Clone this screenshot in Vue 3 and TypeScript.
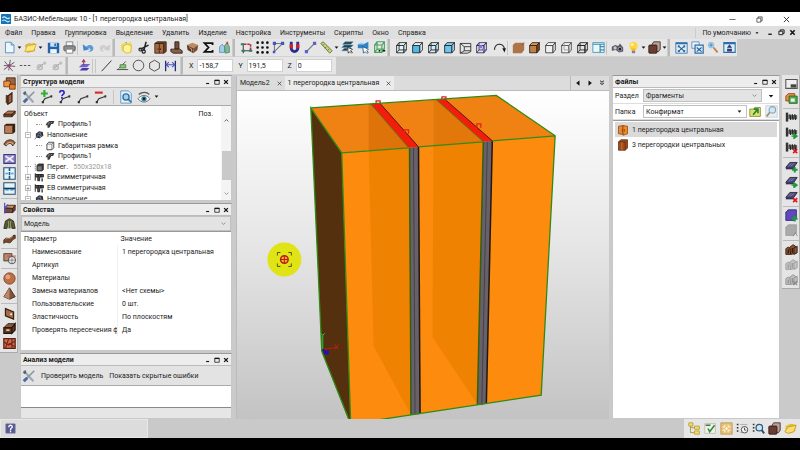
<script setup lang="ts">
import { ref } from 'vue'

const cube = (front: string, top: string, side: string, stroke = '#1a1a1a') =>
  `<g stroke="${stroke}" stroke-linejoin="round"><path d="M2 5.5h9v9H2z" fill="${front}"/><path d="M2 5.5l3-3.500h9l-3 3.500z" fill="${top}"/><path d="M11 5.500l3-3.500v9l-3 3.500z" fill="${side}"/></g>`
const wire = (fill: string, stroke = '#1a1a1a') =>
  `${cube(fill, fill, fill, stroke)}<path d="M5 2v9h9M5 11l-3 3.500" fill="none" stroke="${stroke}"/>`
const plus = '<path d="M12 8.500v7M8.500 12h7" stroke="#1f9a3a" stroke-width="2.500"/>'
const arrow = '<path d="M8 12.500h5M11 9.500l4 3-4 3z" stroke="#1f9a3a" fill="#1f9a3a" stroke-width="1.500"/>'
const cross = '<path d="M10 10l5 5M15 10l-5 5" stroke="#e01818" stroke-width="2"/>'
const screw =
  '<path d="M1 2h3v11H1z" fill="#333"/><path d="M4 5h11v5H4z" fill="#666"/><path d="M6 4l1 7M9 4l1 7M12 4l1 7" stroke="#222" stroke-width="1.500"/>'
const slab =
  '<path d="M1 9l5-6h9l-4 6z" fill="#4e4a82" stroke="#222"/><path d="M1 9h10v2.500H1z" fill="#34305e"/><path d="M4 8l4-4M7 8l4-4" stroke="#8a86bd"/>'
const pen = (c: string) => `<path d="M3 14l2.500-4 7-2.500" fill="none" stroke="${c}" stroke-width="1.300"/><path d="M2 12.500h2.500v2.500H2zM12 6h2v2.500h-2z" fill="${c}"/>`
const boxes = (a: string, b: string) =>
  `<path d="M1 7l3-2 3 2v7H1z" fill="${a}" stroke="${b}"/><path d="M6 5l4-3 3 2v9l-6 1z" fill="${a}" stroke="${b}"/><path d="M11 6l4-2v8l-4 2z" fill="${a}" stroke="${b}"/><path d="M4 8v5M9 6v6" stroke="${b}" stroke-width="1.500"/>`
const wood = '#9c6440'
const woodDark = '#3a2012'

const icons: Record<string, string> = {
  app: '<rect width="16" height="16" rx="1" fill="#1674b5"/><path d="M2 6q3-3 6 0t6 0M2 11q3-3 6 0t6 0" fill="none" stroke="#cdeaff" stroke-width="1.800"/>',
  new: '<path d="M3 1.500h7l3.500 3.500v9.500H3z" fill="#eef7ff" stroke="#3d82bd"/><path d="M10 1.500V5h3.500" fill="#b8dcf5" stroke="#3d82bd"/>',
  open: '<path d="M2 5l5-2 2 1 4-1v9l-9 2z" fill="#f0cd48" stroke="#c9a020"/><path d="M1 13l3-7 11-2-3 8z" fill="#ffe680" stroke="#d0aa28"/>',
  save: '<path d="M1 2h13l1 1v12H1z" fill="#2364a8"/><path d="M4 2h8v5H4z" fill="#cde3f7"/><path d="M4 10h8v5H4z" fill="#eef5fc"/><path d="M9 3h2v3H9z" fill="#2364a8"/>',
  print: '<path d="M4 1h8v5H4z" fill="#f5f5f5" stroke="#777"/><rect x="1" y="6" width="14" height="6" rx="1" fill="#8b8d92" stroke="#555"/><path d="M4 10h8v5H4z" fill="#fff" stroke="#777"/>',
  undo: '<path d="M5 7c4-4 9-2 9 2s-4 5-7 4c4 0 5-5 0-4z" fill="#5a9bd8"/><path d="M1 4l1 8 7-2z" fill="#3e86cf"/>',
  redo: '<path d="M11 7C7 3 2 5 2 9s4 5 7 4c-4 0-5-5 0-4z" fill="#cfcfcf"/><path d="M15 4l-1 8-7-2z" fill="#cacaca"/>',
  copy: '<path d="M1 5l4-3 4 1 4-2 2 4-1 9-7 1-5-3z" fill="#efd957"/><path d="M4 6l5-2 5 2-1 8-5 1-4-3z" fill="#fff3a0" stroke="#d1b83c"/><path d="M6 2l2-1 1 2" fill="#66b34c"/>',
  cut: '<path d="M10 1L7 12M13 5L3 10" stroke="#222" stroke-width="1.800"/><circle cx="7" cy="13" r="2" fill="none" stroke="#222" stroke-width="1.500"/><circle cx="3" cy="10.500" r="1.800" fill="none" stroke="#222" stroke-width="1.500"/>',
  cabinet: `<path d="M1 3h11v12H1z" fill="#a66a42" stroke="${woodDark}"/><path d="M1 3l3-2h11v12l-3 2V3z" fill="#74442a" stroke="${woodDark}"/><path d="M6.500 3v12M5 9v2M8 9v2" stroke="${woodDark}"/>`,
  hinge: '<path d="M6 1h5v9H6z" fill="#74503c" stroke="#2a1a12"/><path d="M1 10h11l3 2v3H4l-3-2z" fill="#8a6048" stroke="#2a1a12"/>',
  block: `<path d="M1 5l7-3 7 3-6 4z" fill="#c08a60"/><path d="M1 5l8 4v6l-7-4z" fill="#5a3420"/><path d="M15 5l-6 4v6l5-4z" fill="#7c4c30"/><path d="M4 8l3 2v3" fill="none" stroke="#e8c8a8"/>`,
  sum: '<path d="M13 5V2.500H3L8 8l-5 5.500h10V11" fill="none" stroke="#111" stroke-width="2.200"/>',
  house: '<path d="M2 7l3-3 3 3v7H2z" fill="#9fd0ec" stroke="#5d8eaa"/><path d="M8 6l3-4 3 5v7l-5 1z" fill="#7fb89a" stroke="#4c8a6a"/><path d="M11 1l1 3" stroke="#d04040" stroke-width="2"/>',
  axes: '<path d="M4 3v12M2 12h13" stroke="#444" stroke-width="1.300"/><path d="M5 4h8v7" fill="none" stroke="#c02840" stroke-width="2" stroke-dasharray="3 1"/><path d="M1 4h4M2 12h4M11 12h4" stroke="#2f7f60" stroke-width="2.500"/>',
  grid: [2, 8, 14].map((y) => [2, 8, 14].map((x) => `<circle cx="${x}" cy="${y}" r="1.600" fill="#111"/>`).join('')).join(''),
  ortho: '<path d="M3 2v11L13 3H4" fill="none" stroke="#777" stroke-width="1.300"/><path d="M1 1h4v4H1zM11 1h4v4h-4zM1 12h3v3H1z" fill="#4754c4"/>',
  magnet: '<path d="M4 1v8a4 4 0 008 0V1" fill="none" stroke="#272d91" stroke-width="3.500"/><path d="M2 4h4v5H2zM10 4h4v5h-4z" fill="#c72332"/>',
  link: '<path d="M3 13L13 3" stroke="#777" stroke-width="1.500"/><path d="M1 11h4v4H1zM11 1h4v4h-4z" fill="#5962cb"/>',
  ruler: '<path d="M1 3l3-2 11 11-3 3z" fill="#c9cf7b" stroke="#61672c"/><path d="M5 4L3.500 5.500M8 7L6 9M11 10l-2 2" stroke="#61672c"/>',
  layers: '<path d="M2 4l3-3h10l-3 3zM1 8l3-3h11l-3 3zM1 12l3-3h5l-2 3z" fill="#29414f" stroke="#4a90b8" stroke-width=".7"/><path d="M8 8l1 7 2-2 2 2 1-1-2-2 2-2z" fill="#fff" stroke="#222"/>',
  layersBlue: '<path d="M1 4h7l6-3v8H1z" fill="#2e83ca"/><path d="M1 4l3-2h4v2z" fill="#9ad0f5"/><path d="M7 7l1 8 2-2 2 2 2-1-2-2 2-2z" fill="#fff" stroke="#27506e"/>',
  boxGreen: '<path d="M2 5h9v9H2zM2 5l3-4h9v9l-3 4M11 5l3-4M5 1v9h9M5 10l-3 4" fill="none" stroke="#43a25a" stroke-width="1.300"/><path d="M7 12h2M12 12h3" stroke="#111" stroke-width="2"/>',
  viewFront: wire('#e5f3fb'),
  viewSolid: cube('#4fbae8', '#e9f5fb', '#e9f5fb'),
  viewTop: wire('#d4edf8'),
  viewBlue: cube('#6cc5ec', '#8fd0ef', '#b5def2'),
  viewBack: '<path d="M1.500 3h13v10l-4 2h-9zM1.500 3l5 4h8M6.500 7v5h8M6.500 12l-5 3" fill="none" stroke="#222"/>',
  viewPurple: `${wire('none', '#2b2450')}<path d="M5 5h4v4H5zM9 9h3v3H9z" fill="#8b6ce0"/>`,
  rotate: '<path d="M2 11A6 6 0 0114 9" fill="none" stroke="#222" stroke-width="1.300"/><path d="M11.500 9l2.500 5 2-5z" fill="#111"/>',
  brownSolid: '<path d="M1 5l3-3h11v9l-3 4H1z" fill="#ad744a"/><path d="M12 5l3-3" stroke="#8a5936"/>',
  brownEdge: cube('#bd8046', '#d59a5c', '#7c4a22', '#2a1a0c'),
  white: cube('#f0f0f0', '#fafafa', '#dedede', '#333'),
  whiteEdge: `${cube('#eeeeee', '#f8f8f8', '#e4e4e4', '#444')}<path d="M5 2v9h9" fill="none" stroke="#999"/>`,
  wire: wire('none', '#1c1c1c'),
  panes: '<path d="M1 2h14v12H1z" fill="#eaf7fa" stroke="#3b8db0"/><path d="M1 4h14M10 4v10M10 7h5M10 11h5" stroke="#3b8db0" stroke-width="1.500"/>',
  camera: '<path d="M1 7l4-2 4 1 2-3 4 5v5l-5 1-4-3-5 1z" fill="#5a5964"/><circle cx="5" cy="8.500" r="2" fill="#c5c8d8"/><circle cx="11" cy="10" r="2.300" fill="#22242e" stroke="#aab"/>',
  bulb: '<circle cx="8" cy="6" r="5" fill="#ffd63e"/><path d="M5 9h6l-1 4H6z" fill="#f1c030"/><path d="M6 12h4v3H6z" fill="#858585"/><circle cx="6.500" cy="4.500" r="1.800" fill="#fff5bb"/>',
  material: '<path d="M5 4l2-3h8v9l-2 3H5z" fill="#b9a196" stroke="#3a2620"/><rect x="1" y="5" width="10" height="10" rx="1" fill="#6a3d32" stroke="#2b1813"/>',
  fit: '<path d="M1 2h14v13H1z" fill="#dcf0fb" stroke="#2f6eaa"/><path d="M1 3h14" stroke="#2f6eaa" stroke-width="2"/><path d="M4 6l8 7M12 6l-8 7" stroke="#2a5684" stroke-width="1.300"/><path d="M4 8V6h2M10 6h2v2M4 11v2h2M10 13h2v-2" fill="none" stroke="#2a5684"/>',
  fitAll: '<path d="M1 1h9v8H1z" fill="#e5f2fb" stroke="#5888bb"/><path d="M5 5h10v10H5z" fill="#dcf0fb" stroke="#2f6eaa" stroke-width="1.500"/><path d="M7 8l6 5M13 8l-6 5" stroke="#2a5684" stroke-width="1.300"/>',
  wand: '<circle cx="5" cy="5" r="3.500" fill="#a8d4ee" stroke="#8ab9d8"/><path d="M8 8l5 6" stroke="#bc8149" stroke-width="2.200"/><path d="M5 3v4M3 5h4" stroke="#337bb2"/>',
  home: '<path d="M1 2h14v12H1z" fill="#dcf0fb" stroke="#2f6eaa" stroke-width="1.300"/><path d="M1 3h14" stroke="#2f6eaa" stroke-width="2"/><path d="M8 4l3 4v5H5V8z" fill="#34407e"/><path d="M5 9h6" stroke="#fff"/>',
  star: '<path d="M1 13L14 4M2 3l10 12M9 1L7 14M1 8l14 1" stroke="#584a5b" stroke-width="1.100"/><circle cx="7.500" cy="8" r="2" fill="#a33e74"/>',
  dash: '<path d="M1 8h14" stroke="#555" stroke-width="1.500" stroke-dasharray="3 2"/>',
  knot: '<path d="M2 13l5-5 6-4" stroke="#bbb"/><circle cx="6" cy="10" r="3" fill="none" stroke="#bbb" stroke-width="1.800"/><circle cx="12" cy="5" r="2" fill="#c0c0c0"/>',
  plane: '<path d="M1 10l4-4h10l-4 4z" fill="#6c65ce"/><path d="M2 14l3-3h9l-3 3z" fill="#473da4"/><path d="M7 8V2M5 4l2-3 2 3" stroke="#a33355" fill="none" stroke-width="1.300"/>',
  line: '<path d="M2 15L14 2" stroke="#333" stroke-width="1.200"/>',
  angle: '<path d="M1 13h14M3 12L12 3" stroke="#333"/><path d="M5 7h7v4H5z" fill="#8fc66b" stroke="#438348"/>',
  circle: '<circle cx="8" cy="8" r="6.500" fill="none" stroke="#333"/>',
  hexagon: '<path d="M8 1.500l6 3.500v6.500L8 15l-6-3.500V5z" fill="none" stroke="#333"/>',
  dimension: '<path d="M2 2v13M14 2v13" stroke="#24306e" stroke-width="1.600"/><path d="M2 7h12M6 4L2.500 7 6 10M10 4l3.500 3L10 10" fill="none" stroke="#4658bc" stroke-width="1.300"/>',
  panelBoth: '<path d="M4 1h11v9H4z" fill="#9c6440" stroke="#3a2012"/><path d="M1 5h8v7H1z" fill="#f09340" stroke="#6a3210"/><path d="M8 9h7v6H8z" fill="#e77b25" stroke="#6a3210"/>',
  panelV: `<path d="M6 5l5-4v11l-5 3z" fill="${wood}" stroke="${woodDark}" stroke-width="1.500"/><path d="M6 5L4 4v9l2 2z" fill="#5f3820" stroke="${woodDark}"/>`,
  panelH: `<path d="M1 9l5-4h9l-4 4z" fill="#b77a50" stroke="${woodDark}"/><path d="M1 9h10v3H1zM11 9l4-4v3l-4 4z" fill="#704127" stroke="${woodDark}"/>`,
  panelF: `<path d="M2 4l2-2h11v10l-2 2z" fill="${woodDark}"/><path d="M2 4h10v10H2z" fill="#b87d56" stroke="${woodDark}"/>`,
  arc: `<path d="M1 9c3-7 11-7 14-2l-3 4c-2-4-5-4-8 0z" fill="${wood}" stroke="${woodDark}"/><path d="M4 10c3-5 6-4 9-1" fill="none" stroke="#d7aa8a" stroke-width="1.300"/>`,
  sheet: '<path d="M1 3h14v11H1z" fill="#8f89cc" stroke="#403a79" stroke-width="1.300"/><path d="M3 5l10 7M13 5L3 12" stroke="#f0eefc" stroke-width="2"/><path d="M6 7h4v3H6z" fill="#f0eefc"/>',
  splitV: '<path d="M1 1h14v14H1z" fill="#e3f4fc" stroke="#2c4c66" stroke-width="1.300"/><path d="M8 1v14" stroke="#1d5790" stroke-width="2" stroke-dasharray="4 1"/><path d="M3 8h3M10 8h3" stroke="#43a6d5" stroke-width="2"/>',
  splitH: '<path d="M1 1h14v14H1z" fill="#e3f4fc" stroke="#2c4c66" stroke-width="1.300"/><path d="M1 8h14" stroke="#17395a" stroke-width="2"/><path d="M3 9.500h4M9 9.500h4" stroke="#3292d0" stroke-width="2"/>',
  edge: `<path d="M2 7l4-3h9l-3 4z" fill="#c28a61" stroke="${woodDark}"/><path d="M2 8h10v5H2zM12 8l3-4v6l-3 3z" fill="#744a48" stroke="${woodDark}"/><path d="M2 1v13M2 8l4-5" stroke="#5651c7" stroke-width="1.500"/>`,
  hood: '<path d="M1 14L3 5l5-3 5 3 2 9h-4l-1-7H6l-1 7z" fill="#5d5540" stroke="#29290f"/><path d="M6 5h4v9H6z" fill="#8a9a58"/><path d="M8 5v9" stroke="#4c5830"/>',
  wave: `<path d="M1 10c3-5 6 0 9-3 1-1 3-4 5-3v4c-3 0-4 4-6 5-3 1-5-2-8 1z" fill="#78482e" stroke="${woodDark}"/><path d="M3 9c4-3 5 1 9-4" stroke="#c69673" fill="none"/>`,
  boolean: '<path d="M1 2h10v9H1z" fill="#b88b70" stroke="#4a2d20"/><circle cx="11" cy="10" r="4.500" fill="#ededed" stroke="#333"/><path d="M5 5h11" stroke="#c04444"/><path d="M11 7v7M7 10h8" stroke="#777"/>',
  sphere: '<circle cx="8" cy="8" r="7" fill="#bd6e43" stroke="#7b4125"/><circle cx="6" cy="6" r="3" fill="#dda482"/>',
  pyramid: '<path d="M8 1l7 11-7 3-7-3z" fill="#80533d" stroke="#3a2012"/><path d="M8 1v14l-7-3z" fill="#bd8565"/>',
  door: `<path d="M3 2l10 4v9L3 11z" fill="#a56e49" stroke="${woodDark}" stroke-width="1.500"/><circle cx="10" cy="9" r="1.300" fill="#eee"/>`,
  drawer: `<path d="M1 7l5-5h9l-4 5z" fill="#8a5a3c" stroke="#21120b"/><path d="M1 7h10v7H1zM11 7l4-5v8l-4 4z" fill="#623720" stroke="#21120b" stroke-width="1.300"/><path d="M4 10h4" stroke="#eed2bc" stroke-width="2"/>`,
  pattern: '<path d="M1 2h14v12H1z" fill="#d56b43" stroke="#55221a" stroke-width="1.500"/><path d="M1 6l6 4 8-5M3 14l4-12M15 12L7 8M11 2v12" stroke="#75281c" stroke-width="1.500" fill="none"/>',
  tools: '<path d="M2 2l11 12" stroke="#9aa7b4" stroke-width="2.300"/><path d="M14 2L6 10" stroke="#8b98a6" stroke-width="2"/><path d="M6 10l-4 4" stroke="#4c6b9d" stroke-width="3.500"/><path d="M1 4l3-3 1 3-2 2z" fill="#59636f"/>',
  nodeAdd: `${pen('#333')}<path d="M5 0v8M1 4h8" stroke="#36ae35" stroke-width="2.500"/>`,
  nodeAsk: `${pen('#333')}<path d="M2 3c0-3 5-3 5 0 0 2-2.500 2-2.500 4M4.500 8v2" fill="none" stroke="#2f2bc0" stroke-width="2"/>`,
  node: pen('#333'),
  nodeDel: `${pen('#333')}<path d="M1 3h9" stroke="#d92e27" stroke-width="2.500"/>`,
  find: '<path d="M2 1h9l3 3v11H2z" fill="#e4f1fb" stroke="#5c92c2"/><circle cx="8" cy="8" r="3.500" fill="#a4d1ec" stroke="#336d9f" stroke-width="1.500"/><path d="M10.500 10.500L14 14" stroke="#336d9f" stroke-width="2"/>',
  eye: '<path d="M1 10c4-5 10-5 14 0-4 5-10 5-14 0z" fill="#f3f8fa" stroke="#666"/><circle cx="8" cy="10" r="3" fill="#397e9d"/><circle cx="8" cy="10" r="1.300" fill="#111"/><path d="M2 5c4-3 9-3 12 0" fill="none" stroke="#555" stroke-width="1.500"/>',
  profile: '<path d="M3 6l4-3h8l-2 5h-3l-3 6H4v-4H1z" fill="#3b3b3b"/><path d="M5 9l2-4M9 7l2-2" stroke="#bbb"/>',
  fill: '<path d="M3 6l5-4 6 1 1 6-6 4-6-1z" fill="#333"/><path d="M1 15l5-6M5 8l5 2M10 4l1 5" stroke="#667bb5" stroke-width="1.500"/><path d="M7 6l2-1M10 11l2-2" stroke="#eee"/>',
  frame: '<path d="M3 5l3-3h8v9l-3 3H3z" fill="#f4f4f4" stroke="#333" stroke-width="1.300"/><path d="M3 5h8v9M11 5l3-3" fill="none" stroke="#555"/>',
  part: '<path d="M5 5l2-2h8v9l-2 2H5z" fill="#444" stroke="#111"/><path d="M5 6h8v8H5z" fill="#777" stroke="#222"/><path d="M2 3v12" stroke="#333" stroke-dasharray="2 1"/>',
  eb: '<path d="M2 2v12M2 4h13v4H9v6H6V8H2" fill="#555" stroke="#222" stroke-width="1.500"/><path d="M7 3v5M11 3v5M13 10v5" stroke="#222" stroke-width="2"/>',
  help: '<rect x="1" y="1" width="14" height="14" rx="1" fill="#57588f" stroke="#8f90bc"/><path d="M5.500 6c0-4 6-3 5 0-.5 1.500-2.500 1.500-2.500 4M8 11v2.500" fill="none" stroke="#fff" stroke-width="2"/>',
  up: '<path d="M1 5h5l1-2h7v11H1z" fill="#dfe06c" stroke="#83832f"/><path d="M5 12l5-6M6 5h5v5" stroke="#26823a" stroke-width="2" fill="none"/>',
  search: '<rect x="1" y="1" width="14" height="14" fill="#e8eef3" stroke="#c3ccd3"/><circle cx="9" cy="6" r="4" fill="#cde7f6" stroke="#8aa5b7" stroke-width="1.300"/><path d="M6 9l-4 5" stroke="#9b8b79" stroke-width="2"/>',
  fileOpen: '<path d="M2 3l6-1v12l-6-1z" fill="#e98a31" stroke="#8a4312"/><path d="M8 2l6 1v10l-6 2z" fill="#f08a24" stroke="#8a4312"/><path d="M7 7v3M10 7v3" stroke="#7c3a10"/>',
  fileClosed: '<path d="M2 4l3-3h9v11l-3 3H2z" fill="#9d4c19" stroke="#5d2b10"/><path d="M2 4h9v11" fill="none" stroke="#5d2b10"/><path d="M6.500 4v11" stroke="#d88042"/>',
  sheetPart: '<path d="M1 3h14v11H1z" fill="#eee" stroke="#555" stroke-width="1.300"/><path d="M7 9h7v4H7z" fill="#444"/>',
  sheets: '<path d="M1 5l3-3h8v9H1z" fill="#eb8b3b" stroke="#893f12"/><path d="M5 5h10v9H5z" fill="#53a94d" stroke="#24622c"/><path d="M7 8h5v4H7z" fill="#eaf4e5"/>',
  screw,
  screwMove: screw + arrow,
  screwDel: screw + cross,
  slabAdd: slab + plus,
  slabMove: slab + arrow,
  slabDel: slab + cross,
  bodyAdd: `<path d="M1 4l3-3h10v9l-3 4H1z" fill="#5e4bbb" stroke="#2b2270"/>${plus}`,
  bodyOff: '<path d="M1 4l3-3h10v9l-3 4H1z" fill="#aaa" stroke="#999"/><path d="M10 15l3-5 2 5" fill="none" stroke="#888"/>',
  set: boxes('#8a5434', '#2d170d'),
  setOff: boxes('#c4c4c4', '#999'),
  setOffDel: `${boxes('#c0c0c0', '#8f8f8f')}<path d="M10 10l5 5M15 10l-5 5" stroke="#888" stroke-width="1.500"/>`,
  tree: '<path d="M3 4v9h6M3 7h6" fill="none" stroke="#a28a35"/><path d="M1 1h5v4H1zM8 5h6v4H8zM8 11h6v4H8z" fill="#f0dc68" stroke="#b79c36"/>',
  check: '<path d="M1 2h13v12H1z" fill="#f2f2e6" stroke="#b9b9a9"/><path d="M2 4h6" stroke="#4a7a58" stroke-width="2"/><path d="M5 8l2 4 6-8" fill="none" stroke="#2f8d43" stroke-width="2"/>',
  maze: '<path d="M1 1h14v14H1z" fill="#e5bd73" stroke="#bb9a58"/><path d="M3 6h3V3M10 3v3h3M3 10h3v3M10 13v-3h3M6 8h4M8 6v4" fill="none" stroke="#fff4d2" stroke-width="1.300"/>',
  clock: '<path d="M2 2v12" stroke="#333" stroke-width="2" stroke-dasharray="2 2"/><path d="M5 3h9M5 13h3" stroke="#9aa"/><circle cx="10.500" cy="9.500" r="4" fill="#f5f5f5" stroke="#333"/><path d="M10.500 7v3h2" stroke="#333" fill="none"/>',
  zoomList: '<path d="M2 2v12" stroke="#333" stroke-width="2" stroke-dasharray="2 2"/><circle cx="9" cy="7" r="4" fill="#c9e7f6" stroke="#2f5674" stroke-width="1.500"/><path d="M12 10l3 4" stroke="#264b70" stroke-width="2.200"/>',
  folder: '<path d="M2 5l6-3 6 1v8l-6 3-6-1z" fill="#e9bd37"/><path d="M1 12l4-6 10-2-3 8-7 2z" fill="#fbdc70" stroke="#c59422"/>',
  min: '<path d="M3 12h8" stroke="#111" stroke-width="3"/>',
  max: '<path d="M2 3h12v11H2z" fill="none" stroke="#111" stroke-width="2"/><path d="M2 4h12" stroke="#111" stroke-width="3"/>',
  close: '<path d="M3 3l10 10M13 3L3 13" stroke="#111" stroke-width="3.500"/>',
  restore: '<path d="M5 5V2h9v8h-3M2 5h9v8H2z" fill="none" stroke="#111" stroke-width="2"/>',
  thinMin: '<path d="M1 8h14" stroke="#222" stroke-width="1.500"/>',
  thinRestore: '<path d="M5 5V2h9v9h-3M2 5h9v9H2z" fill="none" stroke="#222" stroke-width="1.500"/>',
  thinClose: '<path d="M2 2l12 12M14 2L2 14" stroke="#222" stroke-width="2"/>',
  caret: '<path d="M2 5h12L8 12z" fill="#111"/>',
  chevron: '<path d="M2 5l6 6 6-6" fill="none" stroke="#666" stroke-width="2"/>',
  chevronUp: '<path d="M2 11l6-6 6 6" fill="none" stroke="#444" stroke-width="2.500"/>',
  left: '<path d="M12 1v14L3 8z" fill="#111"/>',
  right: '<path d="M4 1v14l9-7z" fill="#111"/>',
  more: '<path d="M3 2l5 4 5-4M3 8l5 4 5-4" fill="none" stroke="#111" stroke-width="2.500"/>',
}

const menus = ['Файл', 'Правка', 'Группировка', 'Выделение', 'Удалить', 'Изделие', 'Настройка', 'Инструменты', 'Скрипты', 'Окно', 'Справка']

// '|' is a divider, '.' a narrow space, '>' a drop-down arrow after a button
const mainBars: string[][] = [
  ['new', '>', 'open', '>', '.', 'save', 'print', '|', 'undo', 'redo'],
  ['copy', '.', 'cut', 'cabinet', 'hinge', 'block', 'sum', 'house'],
  ['axes', 'grid', 'ortho', 'magnet', 'link', 'ruler', '>', 'layers', 'layersBlue', 'boxGreen'],
  ['viewFront', 'viewSolid', 'viewTop', 'viewBlue', 'viewBack', 'viewPurple', '.', 'rotate', '|', 'brownSolid', 'brownEdge', 'white', 'whiteEdge', 'wire', 'panes', '|', 'camera', 'bulb', '>', 'material', '>'],
  ['fit', 'fitAll', 'wand', 'home'],
]
const snapBar = ['star', 'dash', 'knot', 'knot']
const drawBar = ['plane', '|', '|', 'line', 'angle', 'circle', 'hexagon', 'dimension']
const leftGroups = [
  ['panelBoth', 'panelV', 'panelH', 'panelF', 'arc', 'sheet', 'splitV', 'splitH'],
  ['edge', 'hood', 'wave'],
  ['boolean'],
  ['sphere', 'pyramid'],
  ['door', 'drawer', 'pattern'],
]
const rightGroups = [
  ['sheetPart', 'sheets'],
  ['screw', 'screwMove', 'screwDel'],
  ['slabAdd', 'slabMove', 'slabDel'],
  ['bodyAdd', 'bodyOff'],
  ['set', 'setOff', 'setOffDel'],
]
const statusIcons = ['tree', 'check', 'maze', 'clock', 'zoomList', 'material', 'folder']

const coords = ref([
  { axis: 'X', value: '-158,7' },
  { axis: 'Y', value: '191,5' },
  { axis: 'Z', value: '0' },
])

const treeRows = [
  { level: 1, icon: 'profile', text: 'Профиль1', mark: '' },
  { level: 0, icon: 'fill', text: 'Наполнение', mark: '−' },
  { level: 1, icon: 'frame', text: 'Габаритная рамка', mark: '' },
  { level: 1, icon: 'profile', text: 'Профиль1', mark: '' },
  { level: 0, icon: 'part', text: 'Перег.', size: '550x320x18', mark: '' },
  { level: 0, icon: 'eb', text: 'ЕВ симметричная', mark: '+' },
  { level: 0, icon: 'eb', text: 'ЕВ симметричная', mark: '+' },
  { level: 0, icon: 'fill', text: 'Наполнение', mark: '−' },
]

const properties = [
  ['Наименование', '1 перегородка центральная'],
  ['Артикул', ''],
  ['Материалы', ''],
  ['Замена материалов', '<Нет схемы>'],
  ['Пользовательские', '0 шт.'],
  ['Эластичность', 'По плоскостям'],
  ['Проверять пересечения фу', 'Да'],
]

const files = [
  { icon: 'fileOpen', name: '1 перегородка центральная' },
  { icon: 'fileClosed', name: '3 перегородки центральных' },
]
const selectedFile = ref(0)
const windowIcons = ['min', 'max', 'close']
</script>

<template>
  <div class="window">
    <header class="title">
      <svg class="logo" viewBox="0 0 16 16" v-html="icons.app" />
      <h1>БАЗИС-Мебельщик 10 - [1 перегородка центральная]</h1>
      <div class="title-buttons">
        <button v-for="i in ['thinMin', 'thinRestore', 'thinClose']" :key="i" :aria-label="i"><svg viewBox="0 0 16 16" v-html="icons[i]" /></button>
      </div>
    </header>

    <nav class="menu">
      <button v-for="m in menus" :key="m">{{ m }}</button>
      <div class="menu-right">
        <button class="profile-pick">По умолчанию <svg viewBox="0 0 16 16" v-html="icons.caret" /></button>
        <button v-for="i in ['min', 'restore', 'close']" :key="i" class="mini" :aria-label="i"><svg viewBox="0 0 16 16" v-html="icons[i]" /></button>
      </div>
    </nav>

    <div class="toolrow">
      <div v-for="(bar, b) in mainBars" :key="b" class="bar">
        <template v-for="(i, n) in bar" :key="n">
          <span v-if="i === '|'" class="divider" />
          <span v-else-if="i === '.'" class="space" />
          <button v-else-if="i === '>'" class="drop" aria-label="drop"><svg viewBox="0 0 16 16" v-html="icons.caret" /></button>
          <button v-else class="tool" :aria-label="i"><svg viewBox="0 0 16 16" v-html="icons[i]" /></button>
        </template>
      </div>
    </div>

    <div class="toolrow">
      <div class="bar">
        <button v-for="(i, n) in snapBar" :key="n" class="tool" :aria-label="i"><svg viewBox="0 0 16 16" v-html="icons[i]" /></button>
      </div>
      <div class="bar draw">
        <template v-for="(i, n) in drawBar" :key="n">
          <span v-if="i === '|'" class="divider" />
          <button v-else class="tool" :aria-label="i"><svg viewBox="0 0 16 16" v-html="icons[i]" /></button>
        </template>
      </div>
      <div class="bar coords">
        <label v-for="c in coords" :key="c.axis">{{ c.axis }}<input v-model="c.value" type="text" /></label>
      </div>
    </div>

    <main class="work">
      <aside class="strip left">
        <div class="strip-body">
          <div v-for="(g, n) in leftGroups" :key="n" class="strip-group">
            <button v-for="i in g" :key="i" class="tool" :aria-label="i"><svg viewBox="0 0 16 16" v-html="icons[i]" /></button>
          </div>
        </div>
      </aside>

      <div class="dock">
        <section class="panel">
          <div class="panel-title">
            <h2>Структура модели</h2>
            <button v-for="i in windowIcons" :key="i" :aria-label="i"><svg viewBox="0 0 16 16" v-html="icons[i]" /></button>
          </div>
          <div class="panel-tools">
            <button v-for="i in ['tools', 'nodeAdd', 'nodeAsk', 'node', 'nodeDel']" :key="i" class="tool wide" :aria-label="i"><svg viewBox="0 0 16 16" v-html="icons[i]" /></button>
            <span class="divider" />
            <button class="tool wide" aria-label="find"><svg viewBox="0 0 16 16" v-html="icons.find" /></button>
            <button class="tool wide" aria-label="eye"><svg viewBox="0 0 16 16" v-html="icons.eye" /></button>
            <button class="drop" aria-label="drop"><svg viewBox="0 0 16 16" v-html="icons.caret" /></button>
          </div>
          <div class="tree">
            <div class="tree-list">
              <div class="tree-head"><span>Объект</span><span>Поз.</span></div>
              <ul>
                <li v-for="(r, n) in treeRows" :key="n" :class="'level-' + r.level">
                  <span class="mark" :class="{ boxed: r.mark }">{{ r.mark }}</span>
                  <svg viewBox="0 0 16 16" v-html="icons[r.icon]" />
                  <span>{{ r.text }}</span>
                  <span v-if="r.size" class="dims">{{ r.size }}</span>
                </li>
              </ul>
            </div>
            <div class="scroll">
              <svg viewBox="0 0 16 16" v-html="icons.chevronUp" />
              <span class="thumb" />
              <svg viewBox="0 0 16 16" v-html="icons.chevron" />
            </div>
          </div>
        </section>

        <section class="panel grow">
          <div class="panel-title">
            <h2>Свойства</h2>
            <button v-for="i in windowIcons" :key="i" :aria-label="i"><svg viewBox="0 0 16 16" v-html="icons[i]" /></button>
          </div>
          <div class="select full">
            <select aria-label="Свойства"><option>Модель</option></select>
            <svg viewBox="0 0 16 16" v-html="icons.chevron" />
          </div>
          <div class="props">
            <table>
              <thead><tr><th>Параметр</th><th>Значение</th></tr></thead>
              <tbody>
                <tr v-for="p in properties" :key="p[0]"><td>{{ p[0] }}</td><td>{{ p[1] }}</td></tr>
              </tbody>
            </table>
          </div>
        </section>

        <section class="panel">
          <div class="panel-title">
            <h2>Анализ модели</h2>
            <button v-for="i in windowIcons" :key="i" :aria-label="i"><svg viewBox="0 0 16 16" v-html="icons[i]" /></button>
          </div>
          <div class="panel-tools analysis">
            <button class="tool wide" aria-label="tools"><svg viewBox="0 0 16 16" v-html="icons.tools" /></button>
            <button class="text">Проверить модель</button>
            <button class="text">Показать скрытые ошибки</button>
          </div>
          <div class="log" />
          <div class="log-foot" />
        </section>
      </div>

      <section class="editor">
        <div class="tabs">
          <button class="tab">Модель2<svg viewBox="0 0 16 16" v-html="icons.thinClose" /></button>
          <button class="tab active">1 перегородка центральная<svg viewBox="0 0 16 16" v-html="icons.thinClose" /></button>
          <div class="tab-nav">
            <button v-for="i in ['left', 'right', 'more']" :key="i" :aria-label="i"><svg viewBox="0 0 16 16" v-html="icons[i]" /></button>
          </div>
        </div>
        <div class="canvas">
          <svg viewBox="236 91 373 329" preserveAspectRatio="xMidYMid slice">
            <polygon points="310,108 341,153 350,426 321,352" fill="#54300f" />
            <polygon points="310,108 496,95.500 555,136 341,153" fill="#f08214" />
            <polygon points="368,104 371,104 409,148 368,151" fill="#de7409" />
            <polygon points="433,100 437,100 484,142 433,146" fill="#e27809" />
            <polygon points="341,153 555,136 541,396 350,425" fill="#fd8b0d" />
            <polygon points="368,151 409,148 410,415 373,347" fill="#f08202" />
            <polygon points="433,146 483,142 477,405 432,338" fill="#f08202" />
            <polygon points="409,148 418,147 420,415 410,416" fill="#68616a" />
            <path d="M413 148l1.500 267" stroke="#454148" />
            <path d="M418 147l1.500 268" stroke="#1e1712" stroke-width="1.500" />
            <path d="M409 148l1.500 268" stroke="#32600f" stroke-width="1.500" />
            <polygon points="483,142 492,141 486,405 477,406" fill="#68616a" />
            <path d="M487 142l-5.500 264" stroke="#454148" />
            <path d="M492 141l-6 264" stroke="#1e1712" stroke-width="1.500" />
            <path d="M483 142l-6 264" stroke="#32600f" stroke-width="1.500" />
            <polygon points="370,104 379,103 418,147 408,148" fill="#f31d0c" />
            <polygon points="436,100 444,99 492,141 483,142" fill="#f31d0c" />
            <path d="M370 104l38 44M436 100l47 42" stroke="#5c7c12" />
            <path d="M379 103l39 44M444 99l48 42" stroke="#5d160c" />
            <path d="M375.500 105v-4h4v4M404 134v-4h4v4M441.500 101v-4h4v4M476.500 128v-4h4v4" fill="none" stroke="#e3201a" stroke-width="1.300" />
            <path d="M310 108L496 95.500 555 136 541 396 350 425 341 153 310 108 321 352 350 425M341 153L408 148M418 147L483 142M492 141L555 136" fill="none" stroke="#318a14" stroke-width="1.300" />
            <path d="M322 350v-14M320 334l2 2 2-2" fill="none" stroke="#25c936" />
            <path d="M322 350l16-2M334 345l3 5M338 345l-4 5" fill="none" stroke="#b71f10" />
            <path d="M322 350l5 5M323 354h4v-3" fill="none" stroke="#2111b5" stroke-width="2" />
            <circle cx="283.500" cy="260" r="17" fill="#e0e314" />
            <path d="M276.500 256v-3h3M287.500 253h3v3M290.500 264v3h-3M279.500 267h-3v-3" fill="none" stroke="#5a5213" />
            <circle cx="283.500" cy="260" r="3.800" fill="#f3b434" stroke="#bb1e0d" stroke-width="1.500" />
            <path d="M279.500 260h8M283.500 256v8" stroke="#bb1e0d" />
          </svg>
        </div>
      </section>

      <section class="panel files">
        <div class="panel-title">
          <h2>Файлы</h2>
          <button v-for="i in windowIcons" :key="i" :aria-label="i"><svg viewBox="0 0 16 16" v-html="icons[i]" /></button>
        </div>
        <div class="field">
          <label for="part">Раздел</label>
          <div class="select">
            <select id="part"><option>Фрагменты</option></select>
            <svg viewBox="0 0 16 16" v-html="icons.chevron" />
          </div>
          <button class="filter" aria-label="filter"><svg viewBox="0 0 16 16" v-html="icons.caret" /></button>
        </div>
        <div class="field">
          <label for="folder">Папка</label>
          <div class="select light">
            <select id="folder"><option>Конфирмат</option></select>
            <svg viewBox="0 0 16 16" v-html="icons.caret" />
          </div>
          <button class="tool" aria-label="up"><svg viewBox="0 0 16 16" v-html="icons.up" /></button>
          <button class="tool" aria-label="search"><svg viewBox="0 0 16 16" v-html="icons.search" /></button>
        </div>
        <div class="file-list">
          <button v-for="(f, n) in files" :key="f.name" :class="{ selected: n === selectedFile }" @click="selectedFile = n">
            <svg viewBox="0 0 16 16" v-html="icons[f.icon]" />{{ f.name }}
          </button>
        </div>
      </section>

      <aside class="strip">
        <div class="strip-body">
          <div v-for="(g, n) in rightGroups" :key="n" class="strip-group">
            <button v-for="i in g" :key="i" class="tool" :aria-label="i"><svg viewBox="0 0 16 16" v-html="icons[i]" /></button>
          </div>
        </div>
      </aside>
    </main>

    <footer class="status">
      <div class="status-left"><button class="tool" aria-label="help"><svg viewBox="0 0 16 16" v-html="icons.help" /></button></div>
      <div class="status-right">
        <button v-for="i in statusIcons" :key="i" class="tool" :aria-label="i"><svg viewBox="0 0 16 16" v-html="icons[i]" /></button>
      </div>
    </footer>
  </div>
</template>

<style>
body {
  background: #000;
}
</style>

<style scoped>
* {
  box-sizing: border-box;
}
.window {
  height: 100vh;
  padding: 12px 0;
  display: flex;
  flex-direction: column;
  overflow: hidden;
  background: #000;
  color: #1c1c1c;
  font: 7px/10px Roboto, sans-serif;
}
h1,
h2,
ul {
  margin: 0;
  padding: 0;
  font-size: 7px;
}
h1 {
  font-weight: normal;
}
button {
  border: 0;
  padding: 0;
  background: none;
  color: inherit;
  font: inherit;
  white-space: nowrap;
}
svg {
  display: block;
  flex: none;
}
.title {
  height: 14px;
  flex: none;
  display: flex;
  align-items: center;
  gap: 3px;
  padding: 0 10px 0 1px;
  background: #fefefe;
}
.logo {
  width: 10px;
  height: 10px;
}
.title-buttons {
  margin-left: auto;
  display: flex;
  gap: 20px;
}
.title-buttons svg {
  width: 7px;
  height: 7px;
}
.menu {
  height: 13px;
  flex: none;
  display: flex;
  align-items: center;
  gap: 9px;
  padding: 0 4px 0 5px;
  background: #dfdfdf;
}
.menu-right {
  margin-left: auto;
  display: flex;
  align-items: center;
  gap: 4px;
  padding-left: 6px;
  border-left: 1px solid #ccc;
}
.profile-pick {
  display: flex;
  align-items: center;
  gap: 4px;
  margin-right: 4px;
}
.profile-pick svg {
  width: 4px;
  height: 4px;
}
.mini svg {
  width: 7px;
  height: 7px;
}
.toolrow {
  height: 18px;
  flex: none;
  display: flex;
  background: #cbcbcb;
}
.bar {
  display: flex;
  align-items: center;
  padding: 0 0 0 1px;
  margin-right: 1px;
  background: #e6e6e6;
  border-bottom: 1px solid #d2d2d2;
}
.bar + .bar {
  padding-left: 3px;
  border-left: 2px solid #b9b9b9;
}
.tool {
  width: 16px;
  height: 16px;
  flex: none;
  display: grid;
  place-items: center;
}
.tool svg {
  width: 13px;
  height: 13px;
}
.drop {
  width: 5px;
}
.drop svg {
  width: 5px;
  height: 5px;
}
.divider {
  width: 3px;
  height: 14px;
  border-left: 1px solid #c6c6c6;
}
.space {
  width: 2px;
}
.draw {
  padding-right: 2px;
}
.bar.draw {
  padding-left: 8px;
}
.bar.coords {
  gap: 5px;
  padding: 0 4px 0 6px;
}
.coords label {
  display: flex;
  align-items: center;
  gap: 4px;
}
.coords input {
  width: 36px;
  height: 13px;
  padding: 0 1px;
  border: 1px solid #d0d0d0;
  background: #fff;
  font: inherit;
  color: inherit;
}
.work {
  flex: 1;
  min-height: 0;
  display: flex;
  background: #cacaca;
}
.strip {
  width: 18px;
  flex: none;
}
.strip-body {
  padding: 1px 0 1px 1px;
  background: #e5e5e5;
  border-right: 1px solid #b2b2b2;
  border-bottom: 1px solid #aaa;
}
.strip-group + .strip-group {
  margin-top: 2px;
  padding-top: 1px;
  border-top: 1px solid #bbb;
}
.left .strip-group + .strip-group {
  padding-top: 2px;
}
.strip .tool {
  height: 15px;
}
.dock {
  width: 26.5%;
  min-width: 200px;
  flex: none;
  margin-left: 2px;
  display: flex;
  flex-direction: column;
  gap: 2px;
}
.panel {
  display: flex;
  flex-direction: column;
  background: #fff;
  border: 1px solid #c8c8c8;
  border-top-color: #999;
}
.grow {
  flex: 1;
}
.panel-title {
  height: 12px;
  flex: none;
  display: flex;
  align-items: center;
  gap: 3px;
  padding: 0 2px;
  background: #ededed;
  border-bottom: 1px solid #bbb;
}
.panel-title h2 {
  margin-right: auto;
  white-space: nowrap;
}
.panel-title svg {
  width: 6px;
  height: 6px;
}
.panel-tools {
  height: 18px;
  flex: none;
  display: flex;
  align-items: center;
  gap: 2px;
  background: #e3e3e3;
  border-bottom: 1px solid #aaa;
}
.panel-tools .divider {
  margin-left: 2px;
}
.wide svg {
  width: 14px;
  height: 14px;
}
.tree {
  height: 94px;
  display: flex;
}
.tree-list {
  flex: 1;
  overflow: hidden;
}
.tree-head {
  height: 13px;
  display: flex;
  justify-content: space-between;
  align-items: end;
  padding: 0 8px 0 3px;
}
.tree ul {
  height: 85px;
  display: grid;
  grid-auto-rows: 1fr;
  list-style: none;
  background: linear-gradient(#d5d5d5, #d5d5d5) 6px 0 / 1px 100% no-repeat;
}
.tree li {
  display: flex;
  align-items: center;
  gap: 3px;
  padding-left: 4px;
  white-space: nowrap;
}
.tree li.level-1 {
  padding-left: 15px;
}
.tree li svg {
  width: 10px;
  height: 10px;
}
.mark {
  width: 6px;
  height: 1px;
  border-top: 1px dotted #999;
}
.mark.boxed {
  height: 6px;
  border: 1px solid #bbb;
  background: #fff;
  font-size: 6px;
  line-height: 4px;
  text-align: center;
  color: #666;
}
.dims {
  color: #999;
  margin-left: 2px;
}
.scroll {
  width: 10px;
  display: flex;
  flex-direction: column;
  align-items: center;
  justify-content: space-between;
  padding: 12px 0 4px;
  background: #f4f4f4;
}
.scroll svg {
  width: 5px;
  height: 5px;
}
.thumb {
  width: 9px;
  height: 29px;
  margin-top: 16px;
  background: #c9c9c9;
}
.select {
  height: 13px;
  flex: 1;
  display: flex;
  align-items: center;
  padding-right: 4px;
  background: #e3e3e3;
  border: 1px solid #c0c0c0;
}
.select.full {
  height: 15px;
  flex: none;
}
.select.light {
  background: #fff;
}
.select select {
  flex: 1;
  min-width: 0;
  appearance: none;
  border: 0;
  padding: 0 2px;
  background: none;
  font: inherit;
  color: inherit;
}
.select svg {
  width: 5px;
  height: 5px;
}
.props {
  flex: 1;
  border-top: 1px solid #999;
}
table {
  width: 100%;
  table-layout: fixed;
  border-collapse: collapse;
}
th,
td {
  height: 13px;
  padding: 0 0 0 3px;
  font-weight: normal;
  text-align: left;
  white-space: nowrap;
  overflow: hidden;
}
th:first-child {
  width: 46%;
}
td:first-child {
  padding-left: 11px;
  border-right: 1px solid #f1f1f1;
}
td:last-child {
  padding-left: 4px;
}
.analysis {
  height: 20px;
}
.text {
  margin: 0 2px;
}
.log {
  height: 22px;
  border-bottom: 1px solid #888;
}
.log-foot {
  height: 10px;
  background: #e6e6e6;
}
.editor {
  flex: 1;
  min-width: 0;
  display: flex;
  flex-direction: column;
  margin: 1px 3px 0 4px;
  border-left: 1px solid #bbb;
}
.tabs {
  height: 15px;
  flex: none;
  display: flex;
  background: #dcdcdc;
  border-bottom: 1px solid #bbb;
}
.tab {
  display: flex;
  align-items: center;
  gap: 7px;
  padding: 0 3px;
}
.tab.active {
  background: #ebebeb;
}
.tab svg {
  width: 5px;
  height: 5px;
}
.tab-nav {
  margin-left: auto;
  padding: 0 4px;
  display: flex;
  align-items: center;
  gap: 6px;
  border-left: 1px solid #bbb;
}
.tab-nav svg {
  width: 6px;
  height: 6px;
}
.canvas {
  flex: 1;
  min-height: 0;
  background: linear-gradient(#ffffff, #e4e4e4 50%, #c3c3c3);
}
.canvas svg {
  width: 100%;
  height: 100%;
}
.files {
  width: 21%;
  min-width: 160px;
  flex: none;
  margin-right: 2px;
}
.field {
  height: 16px;
  display: flex;
  align-items: center;
  padding-left: 2px;
  border-bottom: 1px solid #ddd;
}
.field label {
  width: 28px;
}
.filter {
  width: 17px;
  display: grid;
  place-items: center;
}
.filter svg {
  width: 6px;
  height: 6px;
}
.file-list {
  flex: 1;
  padding: 1px 2px;
  display: flex;
  flex-direction: column;
  border-top: 1px solid #999;
}
.file-list button {
  height: 15px;
  display: flex;
  align-items: center;
  gap: 3px;
  padding-left: 2px;
}
.file-list svg {
  width: 12px;
  height: 12px;
}
.file-list .selected {
  background: #dadada;
}
.status {
  height: 19px;
  flex: none;
  display: flex;
  justify-content: space-between;
  background: #c9c9c9;
}
.status-left {
  width: 148px;
  padding-left: 1px;
  display: flex;
  align-items: center;
  background: #dcdcdc;
  border: 1px solid #e8e8e8;
}
.status-left svg {
  width: 11px;
  height: 11px;
}
.status-right {
  display: flex;
  align-items: center;
  padding: 0 2px;
  background: #e6e6e6;
}
</style>
